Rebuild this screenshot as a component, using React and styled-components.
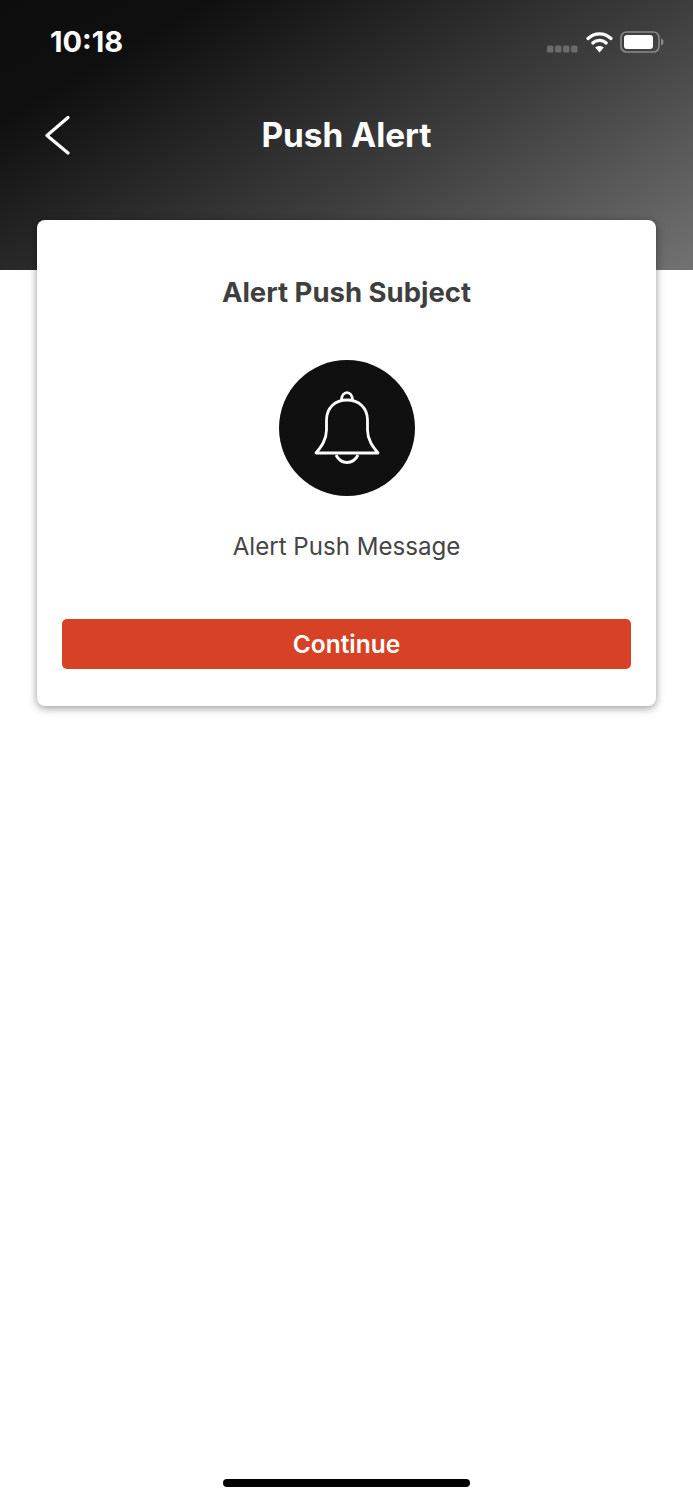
import styled, { createGlobalStyle } from "styled-components";

const GlobalStyle = createGlobalStyle`
  body {
    margin: 0;
    background: #fff;
    font-family: Inter, "Liberation Sans", sans-serif;
  }
`;

const Page = styled.div`
  width: 693px;
  height: 1500px;
  display: flex;
  flex-direction: column;
  overflow: hidden;
  background: #fff;
`;

const Header = styled.header`
  height: 270px;
  flex-shrink: 0;
  box-sizing: border-box;
  padding: 25px 29px 0 50px;
  background: linear-gradient(150deg, #0d0d0d 0%, #0f0f0f 18%, #3e3e3e 60%, #727272 100%);
  color: #fff;
`;

const StatusBar = styled.div`
  height: 34px;
  display: flex;
  align-items: center;
  justify-content: space-between;
`;

const Time = styled.span`
  font-size: 29px;
  font-weight: 700;
  line-height: 34px;
`;

const StatusIcons = styled.div`
  display: flex;
  align-items: center;
  gap: 7px;
`;

const NavBar = styled.div`
  position: relative;
  height: 60px;
  margin: 46px 0 0 -50px;
  display: flex;
  align-items: center;
  justify-content: center;
  width: 693px;
`;

const BackButton = styled.button`
  position: absolute;
  left: 44px;
  top: 10px;
  padding: 0;
  border: 0;
  background: none;
  display: flex;
`;

const Title = styled.h1`
  margin: 0;
  font-size: 33.4px;
  font-weight: 700;
  line-height: 40px;
`;

const Card = styled.section`
  margin: -50px 37px 0;
  height: 486px;
  box-sizing: border-box;
  padding: 52px 25px 0;
  display: flex;
  flex-direction: column;
  align-items: center;
  background: #fff;
  border-radius: 8px;
  box-shadow: 0 2px 8px rgba(0, 0, 0, 0.42);
`;

const Subject = styled.h2`
  margin: 0;
  font-size: 27.5px;
  font-weight: 700;
  line-height: 40px;
  color: #3f3f3f;
`;

const IconCircle = styled.div`
  width: 136px;
  height: 136px;
  margin-top: 48px;
  border-radius: 50%;
  background: #101010;
  display: flex;
  align-items: center;
  justify-content: center;
`;

const Message = styled.p`
  margin: 31px 0 0;
  font-size: 24.1px;
  line-height: 40px;
  color: #454545;
`;

const ContinueButton = styled.button`
  width: 100%;
  height: 50px;
  margin-top: 52px;
  border: 0;
  border-radius: 5px;
  background: #d74125;
  color: #fff;
  font-family: inherit;
  font-size: 24.5px;
  font-weight: 600;
`;

const HomeBar = styled.div`
  width: 247px;
  height: 8px;
  margin: auto auto 13px;
  border-radius: 4px;
  background: #000;
`;

const SignalDots = styled.svg`
  margin: 14px 1px 0 0;
`;

const SignalIcon = () => (
  <SignalDots width="31" height="8" viewBox="0 0 31 8">
    {[0, 8, 16, 24].map(x => (
      <rect key={x} x={x} y="0.5" width="6.5" height="7" rx="1.5" fill="#6b6b6b" />
    ))}
  </SignalDots>
);

const WifiIcon = () => (
  <svg width="27" height="22" viewBox="0 0 27 22" fill="none">
    <path d="M2 7.5C8.5 1.2 18.5 1.2 25 7.5" stroke="#fff" strokeWidth="3.2" strokeLinecap="round" />
    <path d="M6.8 12C10.5 8.6 16.5 8.6 20.2 12" stroke="#fff" strokeWidth="3.2" strokeLinecap="round" />
    <path d="M13.5 21.5L9.2 16.6C11.6 14.6 15.4 14.6 17.8 16.6Z" fill="#fff" />
  </svg>
);

const BatteryIcon = () => (
  <svg width="44" height="24" viewBox="0 0 44 24" fill="none">
    <rect x="1" y="2" width="38" height="20" rx="5.5" stroke="#8a8a8a" strokeWidth="1.6" />
    <rect x="4" y="5" width="29" height="14" rx="3" fill="#fff" />
    <path d="M41 8.5C43 9.5 43.5 10.5 43.5 12C43.5 13.5 43 14.5 41 15.5Z" fill="#8a8a8a" />
  </svg>
);

const BackIcon = () => (
  <svg width="30" height="40" viewBox="0 0 30 40" fill="none">
    <path d="M24 2.5L3 20.5L24 38" stroke="#fff" strokeWidth="3.2" strokeLinecap="round" strokeLinejoin="round" />
  </svg>
);

const BellIcon = () => (
  <svg width="70" height="80" viewBox="0 0 70 80" fill="none" stroke="#fff" strokeWidth="2.8" strokeLinejoin="round">
    <path d="M35 12C23 12 14.5 20 14.5 32V42C14.5 52 9 59 4 65H66C61 59 55.5 52 55.5 42V32C55.5 20 47 12 35 12Z" />
    <path d="M29.5 12.5C29.5 2 40.5 2 40.5 12.5" />
    <path d="M24 67C29 77 41 77 46 67" />
  </svg>
);

export default function App() {
  return (
    <Page>
      <GlobalStyle />
      <Header>
        <StatusBar>
          <Time>10:18</Time>
          <StatusIcons>
            <SignalIcon />
            <WifiIcon />
            <BatteryIcon />
          </StatusIcons>
        </StatusBar>
        <NavBar>
          <BackButton aria-label="Back">
            <BackIcon />
          </BackButton>
          <Title>Push Alert</Title>
        </NavBar>
      </Header>
      <Card>
        <Subject>Alert Push Subject</Subject>
        <IconCircle>
          <BellIcon />
        </IconCircle>
        <Message>Alert Push Message</Message>
        <ContinueButton>Continue</ContinueButton>
      </Card>
      <HomeBar />
    </Page>
  );
}
